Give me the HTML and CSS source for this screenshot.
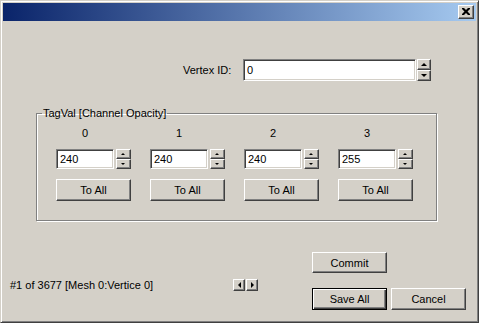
FILE: index.html
```html
<!DOCTYPE html>
<html lang="en">
<head>
  <meta charset="UTF-8" />
  <title>Vertex TagVal Editor</title>
  <link rel="stylesheet" href="styles.css">
</head>
<body>
  <div class="window">
    <div class="titlebar">
      <button class="close" type="button" aria-label="Close">
        <svg width="8" height="7" viewBox="0 0 8 7"><path d="M0 0h2l2 2 2-2h2v1l-2.5 2.5L8 6v1H6L4 5 2 7H0V6l2.5-2.5L0 1z" fill="#000"/></svg>
      </button>
    </div>

    <div class="content">
      <div class="vertex-row">
        <label class="vertex-label" for="vertex-id">Vertex ID:</label>
        <input id="vertex-id" class="field field-wide" value="0">
        <div class="spin spin-tall">
          <button class="spin-btn up" type="button"></button>
          <button class="spin-btn down" type="button"></button>
        </div>
      </div>

      <fieldset class="group">
        <legend>TagVal [Channel Opacity]</legend>
        <div class="channels">
          <div class="channel">
            <div class="channel-head">0</div>
            <div class="channel-input">
              <input class="field field-small" value="240">
              <div class="spin">
                <button class="spin-btn up" type="button"></button>
                <button class="spin-btn down" type="button"></button>
              </div>
            </div>
            <button class="btn" type="button">To All</button>
          </div>
          <div class="channel">
            <div class="channel-head">1</div>
            <div class="channel-input">
              <input class="field field-small" value="240">
              <div class="spin">
                <button class="spin-btn up" type="button"></button>
                <button class="spin-btn down" type="button"></button>
              </div>
            </div>
            <button class="btn" type="button">To All</button>
          </div>
          <div class="channel">
            <div class="channel-head">2</div>
            <div class="channel-input">
              <input class="field field-small" value="240">
              <div class="spin">
                <button class="spin-btn up" type="button"></button>
                <button class="spin-btn down" type="button"></button>
              </div>
            </div>
            <button class="btn" type="button">To All</button>
          </div>
          <div class="channel">
            <div class="channel-head">3</div>
            <div class="channel-input">
              <input class="field field-small" value="255">
              <div class="spin">
                <button class="spin-btn up" type="button"></button>
                <button class="spin-btn down" type="button"></button>
              </div>
            </div>
            <button class="btn" type="button">To All</button>
          </div>
        </div>
      </fieldset>

      <div class="footer">
        <div class="nav">
          <span class="status">#1 of 3677 [Mesh 0:Vertice 0]</span>
          <button class="nav-btn left" type="button" aria-label="Previous"></button>
          <button class="nav-btn right" type="button" aria-label="Next"></button>
        </div>
        <div class="actions">
          <button class="btn" type="button">Commit</button>
          <div class="action-row">
            <button class="btn btn-default" type="button">Save All</button>
            <button class="btn" type="button">Cancel</button>
          </div>
        </div>
      </div>
    </div>
  </div>
</body>
</html>
```

FILE: styles.css
```css
body {
  margin: 0;
  font-family: "Liberation Sans", Arial, sans-serif;
  font-size: 11px;
  color: #000;
  background: #d4d0c8;
}
button, input {
  font: inherit;
  color: #000;
}
.window {
  width: 479px;
  height: 323px;
  box-sizing: border-box;
  background: #d4d0c8;
  border: 1px solid;
  border-color: #d4d0c8 #404040 #404040 #d4d0c8;
  box-shadow: inset 1px 1px #fff, inset -1px -1px #808080;
  padding: 2px;
}
.titlebar {
  height: 18px;
  background: linear-gradient(to right, #0a246a, #a6caf0);
  display: flex;
  justify-content: flex-end;
  align-items: center;
  padding-right: 2px;
}
.close {
  width: 16px;
  height: 14px;
  padding: 0;
  background: #d4d0c8;
  border: 1px solid;
  border-color: #fff #404040 #404040 #fff;
  box-shadow: inset -1px -1px #808080;
  display: flex;
  align-items: center;
  justify-content: center;
}
.close svg {
  display: block;
  margin: 0 1px 1px 0;
}

/* sunken edit fields */
.field {
  box-sizing: border-box;
  background: #fff;
  border: 1px solid;
  border-color: #808080 #fff #fff #808080;
  box-shadow: inset 1px 1px #404040, inset -1px -1px #d4d0c8;
  padding: 0 3px;
  margin: 0;
  outline: none;
}
.field-wide {
  width: 173px;
  height: 22px;
}
.field-small {
  width: 58px;
  height: 20px;
}

/* spinner buttons */
.spin {
  display: flex;
  flex-direction: column;
  width: 15px;
  height: 20px;
}
.spin-tall {
  width: 14px;
  height: 22px;
  margin-left: 1px;
}
.spin-btn {
  flex: 1;
  padding: 0;
  background: #d4d0c8;
  border: 1px solid;
  border-color: #fff #404040 #404040 #fff;
  box-shadow: inset -1px -1px #808080;
  display: flex;
  align-items: center;
  justify-content: center;
}
.spin-btn::after {
  content: "";
  border-left: 2px solid transparent;
  border-right: 2px solid transparent;
  margin-right: 1px;
}
.spin-tall .spin-btn::after {
  border-left-width: 3px;
  border-right-width: 3px;
}
.spin-btn.up::after {
  border-bottom: 2px solid #000;
}
.spin-btn.down::after {
  border-top: 2px solid #000;
}
.spin-tall .spin-btn.up::after {
  border-bottom-width: 3px;
}
.spin-tall .spin-btn.down::after {
  border-top-width: 3px;
}

.vertex-row {
  display: flex;
  align-items: center;
  margin-top: 38px;
  padding-left: 180px;
}
.vertex-label {
  width: 60px;
}

/* group box */
.group {
  margin: 26px 0 0 33px;
  width: 401px;
  height: 114px;
  box-sizing: border-box;
  padding: 0 0 0 19px;
  border: 1px solid #808080;
  box-shadow: inset 1px 1px #fff, 1px 1px #fff;
}
.group legend {
  margin-left: -14px;
  padding: 0 1px;
  line-height: 13px;
}
.channels {
  display: grid;
  grid-template-columns: repeat(4, 75px);
  column-gap: 19px;
  padding-top: 7px;
}
.channel-head {
  width: 58px;
  text-align: center;
  line-height: 13px;
}
.channel-input {
  display: flex;
  gap: 2px;
  margin-top: 9px;
}
.channel .btn {
  margin-top: 10px;
}

.btn {
  width: 75px;
  height: 22px;
  padding: 0;
  background: #d4d0c8;
  border: 1px solid;
  border-color: #fff #404040 #404040 #fff;
  box-shadow: inset -1px -1px #808080;
}
.btn-default {
  border-color: #000;
  box-shadow: inset 1px 1px #fff, inset -1px -1px #404040, inset -2px -2px #808080;
}

/* footer */
.footer {
  display: flex;
  align-items: flex-start;
  margin-top: 31px;
  padding-left: 7px;
}
.nav {
  display: flex;
  align-items: center;
  margin-top: 27px;
}
.status {
  width: 223px;
}
.nav-btn {
  width: 12px;
  height: 12px;
  padding: 0;
  margin-right: 1px;
  background: #d4d0c8;
  border: 1px solid;
  border-color: #fff #404040 #404040 #fff;
  box-shadow: inset -1px -1px #808080;
  display: flex;
  align-items: center;
  justify-content: center;
}
.nav-btn::after {
  content: "";
  border-top: 3px solid transparent;
  border-bottom: 3px solid transparent;
}
.nav-btn.left::after {
  border-right: 3px solid #000;
}
.nav-btn.right::after {
  border-left: 3px solid #000;
}
.actions {
  margin-left: 53px;
  display: flex;
  flex-direction: column;
  gap: 15px;
}
.actions > .btn {
  height: 21px;
}
.action-row {
  display: flex;
  gap: 4px;
}
```
